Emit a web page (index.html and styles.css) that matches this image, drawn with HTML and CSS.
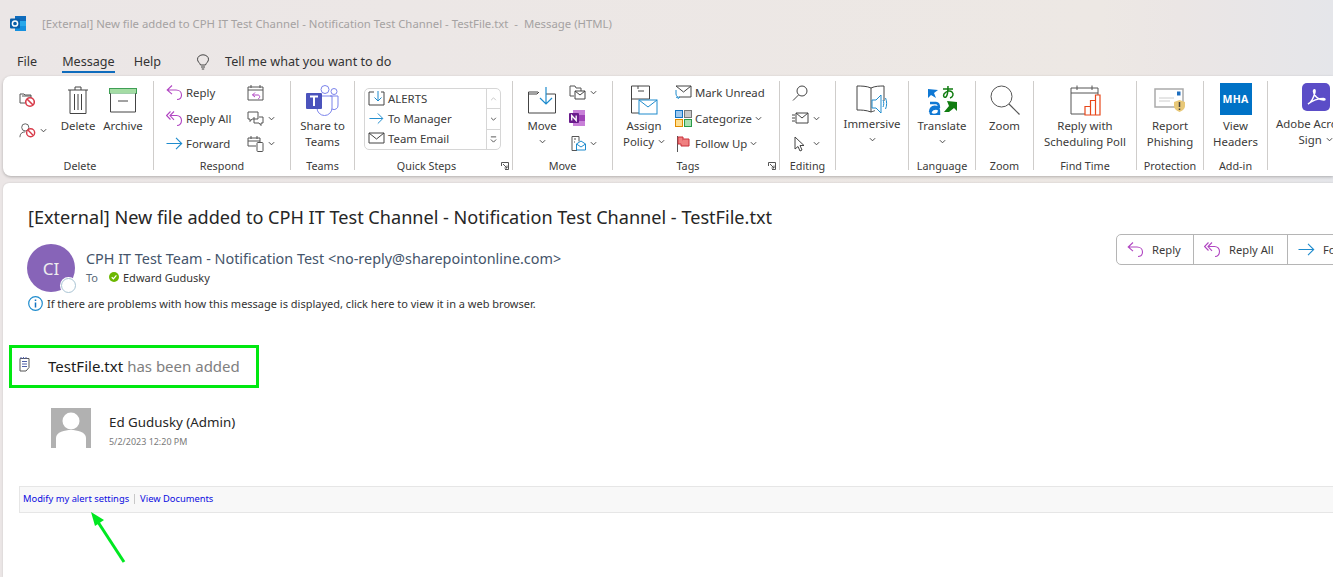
FILE: index.html
```html
<!DOCTYPE html>
<html lang="en">
<head>
<meta charset="utf-8">
<title>Message</title>
<link rel="stylesheet" href="styles.css">
</head>
<body>
<svg class="defs" aria-hidden="true">
  <symbol id="chev" viewBox="0 0 8 5"><path d="M1 1l3 3 3-3" fill="none" stroke="#444" stroke-width="1.1"/></symbol>
  <symbol id="reply" viewBox="0 0 17 17"><path d="M6 1.5L1.2 6 6 10.2M1.2 6H10c3.2 0 5.5 2.2 5.5 5 0 2.6-1.8 4.5-4.5 4.5" fill="none" stroke="#b146c2" stroke-width="1.1"/></symbol>
  <symbol id="replyall" viewBox="0 0 17 17"><path d="M4.5 1.5L.6 5.5 4.5 9.5M8 1.5L4 5.5 8 9.8M4 5.5h6.5c3 0 5 2.2 5 5 0 2.8-1.8 5-4.5 5" fill="none" stroke="#b146c2" stroke-width="1.1"/></symbol>
  <symbol id="forward" viewBox="0 0 17 17"><path d="M.5 8.5h15M10 2.8l5.7 5.7-5.7 5.7" fill="none" stroke="#1e8bcd" stroke-width="1.1"/></symbol>
</svg>

<header class="titlebar">
  <svg class="logo" width="17" height="17" viewBox="0 0 17 17"><rect x="5" y="1" width="11" height="15" fill="#1490df"/><rect x="5" y="1" width="11" height="5" fill="#0f6cbd"/><rect x="10" y="6" width="6" height="5" fill="#28a8ea"/><rect x="0" y="3.5" width="10" height="10" rx="1" fill="#0a5ea8"/><circle cx="5" cy="8.5" r="2.6" fill="none" stroke="#fff" stroke-width="1.5"/></svg>
  <span class="window-title">[External] New file added to CPH IT Test Channel - Notification Test Channel - TestFile.txt &nbsp;- &nbsp;Message (HTML)</span>
</header>

<nav class="tabs">
  <span class="tab tab-file">File</span>
  <span class="tab tab-active">Message</span>
  <span class="tab tab-help">Help</span>
  <svg class="bulb" width="14" height="16" viewBox="0 0 14 16"><path d="M4.5 11C4 9 1.5 8 1.5 5.2 1.5 2.8 4 .8 7 .8s5.500 2 5.500 4.400C12.500 8 10 9 9.500 11zM5 13h4M5.800 15h2.400" fill="none" stroke="#444" stroke-width="1"/></svg>
  <span class="tab">Tell me what you want to do</span>
</nav>

<section class="ribbon">
  <div class="group g-delete">
    <div class="group-body">
      <div class="icon-col">
        <span class="icon-cell"><svg width="17" height="16" viewBox="0 0 17 16"><path d="M1 2h4l1 1h6v3M1 2v9h5M3 4h9" fill="none" stroke="#555"/><circle cx="11" cy="10" r="4.300" fill="#fff" stroke="#d83b4a" stroke-width="1.600"/><path d="M8 7l6 6" stroke="#d83b4a" stroke-width="1.600"/></svg></span>
        <span class="icon-cell"><svg width="17" height="17" viewBox="0 0 19 17"><circle cx="7" cy="5" r="4" fill="none" stroke="#555"/><path d="M1 16c0-4 2.500-6 6-6" fill="none" stroke="#555"/><circle cx="13" cy="11" r="4.500" fill="#fff" stroke="#d83b4a" stroke-width="1.600"/><path d="M10 8l6 6" stroke="#d83b4a" stroke-width="1.600"/></svg><svg class="chev" width="7" height="5"><use href="#chev"/></svg></span>
      </div>
      <div class="large w-delete">
        <span class="large-icon"><svg width="22" height="29" viewBox="0 0 22 29"><path d="M1 4h20M8 4V1h6v3M3 4v23.500h16V4M7.500 8v16M11 8v16M14.500 8v16" fill="none" stroke="#444"/></svg></span>
        <span class="large-text">Delete</span>
      </div>
      <div class="large w-archive">
        <span class="large-icon"><svg width="28" height="25" viewBox="0 0 28 25"><rect x=".5" y=".5" width="27" height="5" fill="#a4dca4" stroke="#3f9f55"/><path d="M1.500 5.500v18.500h25V5.500M9 13h10" fill="#fff" stroke="#444"/></svg></span>
        <span class="large-text">Archive</span>
      </div>
    </div>
    <div class="group-label">Delete</div>
  </div>

  <div class="group g-respond">
    <div class="group-body">
      <div class="rows rows-respond">
        <div class="row"><svg width="17" height="17"><use href="#reply"/></svg><span>Reply</span></div>
        <div class="row"><svg width="17" height="17"><use href="#replyall"/></svg><span>Reply All</span></div>
        <div class="row"><svg width="17" height="17"><use href="#forward"/></svg><span>Forward</span></div>
      </div>
      <div class="rows">
        <div class="row"><svg width="17" height="17" viewBox="0 0 17 17"><path d="M1 3h15v13H1zM1 6h15M4 1v3M13 1v3" fill="none" stroke="#555"/><path d="M8 8.500L5.500 11 8 13M5.500 11H11c2 0 2.500 3 0 4" fill="none" stroke="#b146c2"/></svg></div>
        <div class="row"><svg width="17" height="17" viewBox="0 0 17 17"><path d="M1 2h10v7H5l-2 2.500V9H1zM7 7v6h5l2 2.500V13h2V7h-4" fill="#fff" stroke="#555"/></svg><svg class="chev" width="7" height="5"><use href="#chev"/></svg></div>
        <div class="row"><svg width="17" height="17" viewBox="0 0 17 17"><path d="M9 11H1V3h12v4M1 6h12M4 1v3M10 1v3" fill="none" stroke="#555"/><rect x="10" y="7.500" width="6" height="9" rx=".8" fill="#fff" stroke="#555"/></svg><svg class="chev" width="7" height="5"><use href="#chev"/></svg></div>
      </div>
    </div>
    <div class="group-label">Respond</div>
  </div>

  <div class="group g-center">
    <div class="group-body">
      <div class="large fill">
        <span class="large-icon"><svg width="33" height="31" viewBox="0 0 33 31"><circle cx="19" cy="4.500" r="4" fill="#fff" stroke="#7b83eb"/><circle cx="28" cy="6.500" r="3" fill="#fff" stroke="#7b83eb"/><path d="M24 11h8v9a4 4 0 0 1-6 4M11 11h15v12a7.500 7.500 0 0 1-15 0z" fill="#fff" stroke="#7b83eb"/><rect x="0" y="8" width="16" height="16" rx="1" fill="#4b53bc"/><path d="M4 11.500h8M8 11.500V21" stroke="#fff" stroke-width="2"/></svg></span>
        <span class="large-text">Share to<br>Teams</span>
      </div>
    </div>
    <div class="group-label">Teams</div>
  </div>

  <div class="group g-quick">
    <div class="group-body">
      <div class="quick-box">
        <div class="quick-list">
          <div class="quick-row"><svg width="17" height="15" viewBox="0 0 17 15"><path d="M6 1H1v13h15V1h-3" fill="none" stroke="#444"/><path d="M10 0v10M6.500 6.500l3.500 3.500 3.500-3.500" fill="none" stroke="#1e8bcd"/></svg><span>ALERTS</span></div>
          <div class="quick-row"><svg width="17" height="15"><use href="#forward"/></svg><span>To Manager</span></div>
          <div class="quick-row"><svg width="17" height="15" viewBox="0 0 17 15"><path d="M1 2h15v10H1zM1 2l7.500 6L16 2" fill="none" stroke="#444"/></svg><span>Team Email</span></div>
        </div>
        <div class="quick-scroll">
          <span class="scroll-btn"><svg width="7" height="4" viewBox="0 0 8 5"><path d="M1 4l3-3 3 3" fill="none" stroke="#bbb"/></svg></span>
          <span class="scroll-btn"><svg width="7" height="4"><use href="#chev"/></svg></span>
          <span class="scroll-btn"><svg width="7" height="7" viewBox="0 0 8 8"><path d="M1 1h6M1 4l3 3 3-3" fill="none" stroke="#444"/></svg></span>
        </div>
      </div>
    </div>
    <div class="group-label">Quick Steps</div>
    <svg class="launcher" width="8" height="8" viewBox="0 0 8 8"><path d="M.5 4V.5H7.500V7.500H4M2 2l4 4M6 3.500V6H3.500" fill="none" stroke="#555"/></svg>
  </div>

  <div class="group g-move">
    <div class="group-body">
      <div class="large w-move">
        <span class="large-icon"><svg width="28" height="27" viewBox="0 0 28 27"><path d="M10 5H.5v21h27V7H18M.5 7H9l2-2" fill="#fff" stroke="#444"/><path d="M18 0v17M12 11l6 6 6-6" fill="none" stroke="#1e8bcd" stroke-width="1.200"/></svg></span>
        <span class="large-text">Move</span>
        <svg class="chev-under" width="7" height="5"><use href="#chev"/></svg>
      </div>
      <div class="rows rows-move">
        <div class="row"><svg width="17" height="16" viewBox="0 0 17 16"><path d="M1 1h5l1 2h5v3M1 1v10h4" fill="none" stroke="#555"/><path d="M6 6h10v8H6zM6 6l5 4 5-4" fill="#fff" stroke="#444"/></svg><svg class="chev" width="7" height="5"><use href="#chev"/></svg></div>
        <div class="row"><svg width="17" height="17" viewBox="0 0 17 17"><rect x="4" y="0" width="12" height="16" fill="#c880d8"/><rect x="10" y="5" width="6" height="6" fill="#a044b8"/><rect x="0" y="3" width="10" height="10" rx="1" fill="#6a1b8c"/><path d="M2.700 10.500v-5L7.200 10.500v-5" fill="none" stroke="#fff" stroke-width="1.300"/></svg></div>
        <div class="row row-rules"><svg width="15" height="15" viewBox="0 0 15 15"><path d="M1 .5h7v5M1 .5v14h5M3 3h2M3 6h1" fill="none" stroke="#555"/><path d="M5.500 8l4.500-3 4.500 3v6h-9zM5.500 8l4.500 3 4.500-3" fill="#fff" stroke="#1e8bcd"/></svg><svg class="chev" width="7" height="5"><use href="#chev"/></svg></div>
      </div>
    </div>
    <div class="group-label">Move</div>
  </div>

  <div class="group g-tags">
    <div class="group-body">
      <div class="large w-assign">
        <span class="large-icon"><svg width="28" height="31" viewBox="0 0 28 31"><path d="M1.500 1h18v13H1.500zM1.500 14v14h9M8 6h6M8 1v3M14 1" fill="none" stroke="#444"/><rect x="9" y="15" width="18" height="14" fill="#fff" stroke="#1e8bcd"/><path d="M9 15l9 7 9-7" fill="none" stroke="#1e8bcd"/></svg></span>
        <span class="large-text">Assign<br>Policy<svg class="chev-inline" width="7" height="5"><use href="#chev"/></svg></span>
      </div>
      <div class="rows rows-tags">
        <div class="row"><svg width="17" height="17" viewBox="0 0 17 17"><path d="M1 2h15v11H4M1 2l7.500 6L16 2" fill="none" stroke="#444"/><path d="M1 6v4c0 2 2 3.500 4 3.500M1 13l3 1.500" fill="none" stroke="#1e8bcd"/></svg><span>Mark Unread</span></div>
        <div class="row"><svg class="cat" width="17" height="17" viewBox="0 0 17 17"><rect x=".5" y=".5" width="7" height="7" fill="#9cc8f0" stroke="#1272c0"/><rect x="9.500" y=".5" width="7" height="7" fill="#c8c8c8" stroke="#777"/><rect x=".5" y="9.500" width="7" height="7" fill="#ffdf90" stroke="#e08b00"/><rect x="9.500" y="9.500" width="7" height="7" fill="#a8e0b0" stroke="#2a9a48"/></svg><span>Categorize</span><svg class="chev" width="7" height="5"><use href="#chev"/></svg></div>
        <div class="row"><svg width="17" height="17" viewBox="0 0 17 17"><path d="M2.500 1v16" stroke="#555"/><path d="M3 2h5v7H3z" fill="#f08080" stroke="#c8303a"/><path d="M8 4h6v7H6V9" fill="#f08080" stroke="#c8303a"/></svg><span>Follow Up</span><svg class="chev" width="7" height="5"><use href="#chev"/></svg></div>
      </div>
    </div>
    <div class="group-label">Tags</div>
    <svg class="launcher" width="8" height="8" viewBox="0 0 8 8"><path d="M.5 4V.5H7.500V7.500H4M2 2l4 4M6 3.500V6H3.500" fill="none" stroke="#555"/></svg>
  </div>

  <div class="group g-editing">
    <div class="group-body">
      <div class="rows rows-editing">
        <div class="row"><svg width="16" height="16" viewBox="0 0 16 16"><circle cx="10" cy="6" r="5" fill="none" stroke="#444"/><path d="M6.500 10L1 15.500" stroke="#444"/></svg></div>
        <div class="row"><svg width="17" height="14" viewBox="0 0 17 14"><path d="M4 2h12v10H4zM4 2l6 5 6-5M0 4h3M0 7h3M0 10h3" fill="none" stroke="#444"/></svg><svg class="chev" width="7" height="5"><use href="#chev"/></svg></div>
        <div class="row"><svg width="17" height="16" viewBox="0 0 13 16"><path d="M1 1v12l3-2.500 2 4.500 2-1-2-4.500h4z" fill="#fff" stroke="#444"/></svg><svg class="chev" width="7" height="5"><use href="#chev"/></svg></div>
      </div>
    </div>
    <div class="group-label">Editing</div>
  </div>

  <div class="group g-immersive">
    <div class="group-body">
      <div class="large fill">
        <span class="large-icon"><svg width="32" height="30" viewBox="0 0 32 30"><path d="M15 3C11 1 5 1 1 1v24c4 0 9 0 14 2 3-1 3-1 4-1.500M15 3c4-2 9-2 13-2v15M15 3v24" fill="#fff" stroke="#444"/><path d="M16 15h4l5-5v18l-5-5h-4zM27 15c1 2 1 5 0 7M29.500 13c1.500 3 1.500 8 0 11" fill="#fff" stroke="#1e8bcd"/></svg></span>
        <span class="large-text im-text">Immersive</span>
        <svg class="chev-under" width="7" height="5"><use href="#chev"/></svg>
      </div>
    </div>
  </div>

  <div class="group g-lang">
    <div class="group-body">
      <div class="large fill">
        <span class="large-icon"><svg width="30" height="30" viewBox="0 0 30 30"><path d="M11 5L1 4v9l3-3 5 3-2-5z" fill="#0f78d4"/><path d="M3 27c0-7 9-7 9-1v4M3 18h6c3 0 3 3 3 5M12 24c-9-2-11 6-5 6 3 0 5-2 5-4" fill="none" stroke="#0f78d4" stroke-width="2.400"/><path d="M20 16l10 1v9l-3-3-5 4H17l5-6z" fill="#107c10"/><path d="M16 4h10M21 1c0 6-1 10-2 11-2 1-3-1-2-3 2-3 6-4 8-2s1 5-2 6" fill="none" stroke="#107c10" stroke-width="1.500"/></svg></span>
        <span class="large-text">Translate</span>
        <svg class="chev-under" width="7" height="5"><use href="#chev"/></svg>
      </div>
    </div>
    <div class="group-label">Language</div>
  </div>

  <div class="group g-zoom">
    <div class="group-body">
      <div class="large fill">
        <span class="large-icon"><svg width="30" height="30" viewBox="0 0 30 30"><circle cx="11.500" cy="11.500" r="10.500" fill="none" stroke="#555"/><path d="M19 19l10.500 10.500" stroke="#555" stroke-width="1.200"/></svg></span>
        <span class="large-text">Zoom</span>
      </div>
    </div>
    <div class="group-label">Zoom</div>
  </div>

  <div class="group g-find">
    <div class="group-body">
      <div class="large fill">
        <span class="large-icon"><svg width="31" height="31" viewBox="0 0 31 31"><path d="M1 3h27v10M1 3v26h14M1 8h27M7 .5V5M22 .5V5" fill="#fff" stroke="#555"/><path d="M15.500 22h5.500v8.500h-5.500zM21 16h5v14.500h-5zM26 10.500h4.500v20H26z" fill="#fff" stroke="#e8471a" stroke-width="1.200" transform="translate(-.500 -.500)"/></svg></span>
        <span class="large-text">Reply with<br>Scheduling Poll</span>
      </div>
    </div>
    <div class="group-label">Find Time</div>
  </div>

  <div class="group g-prot">
    <div class="group-body">
      <div class="large fill">
        <span class="large-icon"><svg width="32" height="24" viewBox="0 0 32 24"><rect x="1" y="1" width="28" height="18" fill="#fff" stroke="#aaa" stroke-width="1.500"/><rect x="23" y="3.500" width="3.500" height="4" fill="#1e6fc0"/><path d="M5 10h15M5 13h11" stroke="#ccc"/><path d="M20 14l5.500-2 5.500 2v4c0 3-3 5-5.500 6-2.500-1-5.500-3-5.500-6z" fill="#e8c878"/><path d="M25.500 14v5M25.500 20.500v1.500" stroke="#444" stroke-width="1.500"/></svg></span>
        <span class="large-text">Report<br>Phishing</span>
      </div>
    </div>
    <div class="group-label">Protection</div>
  </div>

  <div class="group g-addin">
    <div class="group-body">
      <div class="large fill">
        <span class="mha">MHA</span>
        <span class="large-text">View<br>Headers</span>
      </div>
    </div>
    <div class="group-label">Add-in</div>
  </div>

  <div class="group g-adobe">
    <div class="group-body">
      <div class="large w-adobe">
        <span class="adobe-icon"><svg width="20" height="20" viewBox="0 0 20 20"><path d="M2 17c3-1 6-7 7-12 .5-3-1.500-3-1.500-.5 0 4 5 8.500 10 8.500 2 0 2-1.500 0-1.500-5 0-11 2-15.500 5.500z" fill="none" stroke="#fff" stroke-width="1.500"/></svg></span>
        <span class="large-text adobe-text">Adobe Acrobat<br>Sign<svg class="chev-inline" width="7" height="5"><use href="#chev"/></svg></span>
      </div>
    </div>
  </div>
</section>

<main class="message">
  <h1 class="subject">[External] New file added to CPH IT Test Channel - Notification Test Channel - TestFile.txt</h1>
  <div class="head">
    <div class="avatar">CI<span class="presence"></span></div>
    <div class="meta">
      <div class="sender">CPH IT Test Team - Notification Test &lt;no-reply@sharepointonline.com&gt;</div>
      <div class="to"><span class="to-label">To</span><svg width="10" height="10" viewBox="0 0 10 10"><circle cx="5" cy="5" r="5" fill="#6bb700"/><path d="M2.700 5.200L4.400 6.800 7.400 3.400" fill="none" stroke="#fff" stroke-width="1.200"/></svg><span>Edward Gudusky</span></div>
    </div>
    <div class="actions">
      <button class="action act-reply" type="button"><svg width="17" height="17"><use href="#reply"/></svg>Reply</button>
      <button class="action act-all" type="button"><svg width="17" height="17"><use href="#replyall"/></svg>Reply All</button>
      <button class="action act-fwd" type="button"><svg width="17" height="17"><use href="#forward"/></svg>Forward</button>
    </div>
  </div>
  <div class="info"><svg width="15" height="15" viewBox="0 0 15 15"><circle cx="7.500" cy="7.500" r="6.800" fill="#fff" stroke="#1e8bcd" stroke-width="1.200"/><path d="M7.500 6.500v5M7.500 3.500v1.500" stroke="#1272c0" stroke-width="1.500"/></svg><span>If there are problems with how this message is displayed, click here to view it in a web browser.</span></div>

  <div class="file-row">
    <svg class="file-icon" width="11" height="15" viewBox="0 0 11 15"><path d="M1 1.500h9v9l-3 3.500H1z" fill="#fff" stroke="#555"/><path d="M3 4.500h5M3 7h5M3 9.500h5M2 0v2M4.500 0v2M7 0v2" stroke="#5060a8"/></svg>
    <span class="file-name">TestFile.txt</span>
    <span class="file-added">has been added</span>
  </div>
  <div class="author">
    <svg class="author-pic" width="40" height="40" viewBox="0 0 40 40"><rect width="40" height="40" fill="#b1b1b1"/><circle cx="20" cy="13" r="8.500" fill="#fff"/><path d="M5 40V30c0-6 9-8 15-8s15 2 15 8v10z" fill="#fff"/></svg>
    <div>
      <div class="author-name">Ed Gudusky (Admin)</div>
      <div class="author-date">5/2/2023 12:20 PM</div>
    </div>
  </div>
  <footer class="links"><a href="#">Modify my alert settings</a><span class="pipe"></span><a href="#">View Documents</a></footer>

  <div class="highlight"></div>
  <svg class="pointer" width="45" height="60" viewBox="0 0 45 60"><path d="M39 57L11 14" stroke="#00e820" stroke-width="3"/><path d="M6 7l13 8-9 6z" fill="#00e820"/></svg>
</main>
</body>
</html>
```

FILE: styles.css
```css
* { box-sizing: border-box; }
html, body { margin: 0; height: 100%; }
body {
  width: 1333px;
  height: 577px;
  overflow: hidden;
  background: linear-gradient(to right, #ebe6e6 0, #ece7e6 400px, #ede8e4 1100px, #ebe6e5 1180px, #e5e6ea 1333px);
  font-family: "Noto Sans", "Open Sans", sans-serif;
  color: #3b3a39;
}
.defs { position: absolute; width: 0; height: 0; }
svg { flex: none; display: block; }

.titlebar { height: 46px; display: flex; align-items: center; padding-left: 10px; }
.logo { margin-right: 15px; }
.window-title { font-size: 11.350px; color: #a5a2a2; white-space: pre; }

.tabs { height: 30px; display: flex; align-items: flex-start; padding-left: 17px; font-size: 12.6px; }
.tab { line-height: 31px; height: 26px; color: #333; }
.tab-file { margin-right: 25px; }
.tab-active { border-bottom: 2px solid #0f6cbd; margin-right: 19px; height: 27px; }
.tab-help { margin-right: 35px; }
.bulb { margin: 8px 15px 0 0; }

.ribbon {
  margin-left: 3px;
  height: 100px;
  display: flex;
  background: #fff;
  border-radius: 8px 0 0 8px;
  box-shadow: 0 1px 3px rgba(0,0,0,.25);
  padding-top: 5px;
  font-size: 11.4px;
  color: #3b3a39;
  overflow: hidden;
}
.group {
  position: relative;
  height: 89px;
  display: flex;
  flex-direction: column;
  flex: none;
  border-right: 1px solid #cfcdcb;
}
.group-body { flex: 1; display: flex; min-height: 0; }
.group-label {
  height: 14px;
  line-height: 14px;
  margin-bottom: -3px;
  text-align: center;
  font-size: 10.8px;
  white-space: nowrap;
}
.launcher { position: absolute; right: 3px; bottom: 0; }
.g-delete { width: 151px; padding-left: 16px; }
.g-respond { width: 137px; padding-left: 12px; }
.g-center { width: 64px; }
.g-quick { width: 158px; padding-left: 9px; }
.g-move { width: 100px; }
.g-tags { width: 167px; }
.g-editing { width: 56px; padding-left: 12px; }
.g-immersive { width: 73px; }
.g-lang { width: 67px; }
.g-zoom { width: 58px; }
.g-find { width: 103px; }
.g-prot { width: 67px; }
.g-addin { width: 64px; }
.g-adobe { flex: 1; border-right: 0; }
.g-delete .group-label { margin-left: -12px; }
.g-respond .group-label { margin-left: -12px; }
.g-quick .group-label { margin-left: -9px; margin-right: 14px; }
.g-tags .group-label { margin-right: 16px; }
.g-editing .group-label { margin-left: -12px; }

.icon-col { width: 38px; padding-top: 3px; display: flex; flex-direction: column; }
.icon-cell { height: 31px; display: flex; align-items: center; gap: 4px; }

.large { display: flex; flex-direction: column; align-items: center; padding-top: 3px; flex: none; }
.fill { width: 100%; }
.large-icon { height: 32px; display: flex; align-items: center; justify-content: center; }
.large-text { margin-top: 2px; line-height: 16px; text-align: center; white-space: nowrap; }
.im-text { margin-top: 0; }
.chev-under { margin-top: 5px; }
.chev-inline { display: inline-block; margin-left: 4px; vertical-align: 2px; }
.w-delete { width: 42px; }
.w-archive { width: 46px; margin-left: 1px; }
.w-move { width: 58px; }
.w-assign { width: 62px; }
.w-adobe { padding-left: 8px; align-items: flex-start; }
.adobe-icon {
  width: 28px; height: 28px; margin-left: 26px; background: #5b4dc7; border-radius: 5px;
  display: flex; align-items: center; justify-content: center; margin-top: -1px;
}
.adobe-text { margin-top: 5px; }
.mha {
  width: 32px; height: 32px; background: #0072c6; color: #fff; font-size: 10.5px; font-weight: 700;
  display: flex; align-items: center; justify-content: center; letter-spacing: .2px; margin-top: -1px; margin-bottom: 1px;
}

.rows { display: flex; flex-direction: column; margin-top: -1px; }
.row { height: 25.500px; display: flex; align-items: center; gap: 3px; white-space: nowrap; }
.row .chev { margin-left: 1px; }
.rows-respond { width: 81px; }
.rows-move { margin-left: -2px; }
.rows-tags .row { letter-spacing: -.05px; }
.row-rules svg:first-child { margin-left: 2px; }
.rows-tags .row .chev { margin-left: 0; }

.quick-box { width: 137px; height: 62px; margin-top: 7px; border: 1px solid #d6d6d6; border-radius: 5px; display: flex; }
.quick-list { flex: 1; margin-top: -2px; padding: 1px 0 0 3px; }
.quick-row { height: 20px; display: flex; align-items: center; gap: 3px; }
.quick-scroll { width: 14px; border-left: 1px solid #d6d6d6; display: flex; flex-direction: column; }
.scroll-btn { flex: 1; display: flex; align-items: center; justify-content: center; border-bottom: 1px solid #d6d6d6; }
.scroll-btn:last-child { border-bottom: 0; }

.message {
  position: relative;
  margin: 7px 0 0 3px;
  height: 394px;
  background: #fff;
  border-radius: 6px 0 0 0;
  overflow: hidden;
  box-shadow: 0 0 2px rgba(0,0,0,.15);
}
.subject {
  margin: 23px 0 15px 25px;
  font-size: 18.100px;
  line-height: 23px;
  font-weight: 400;
  color: #262626;
  white-space: nowrap;
}
.head { display: flex; padding-left: 24px; height: 48px; }
.avatar {
  position: relative; width: 48px; height: 48px; border-radius: 50%;
  background: #8764b8; color: #eee; font-size: 17px;
  display: flex; align-items: center; justify-content: center; flex: none;
}
.presence {
  position: absolute; right: -1px; bottom: -1px; width: 15px; height: 15px;
  border-radius: 50%; background: #fff; border: 1.500px solid #a9c4d4; box-shadow: 0 0 0 1px #fff;
}
.meta { margin: 4px 0 0 11px; white-space: nowrap; }
.sender { height: 19px; line-height: 21px; font-size: 14.400px; color: #44546a; }
.to { height: 20px; display: flex; align-items: center; font-size: 11px; color: #333; }
.to-label { width: 23px; color: #5a6a7a; }
.to svg { margin-right: 4px; }
.actions {
  margin: -10px -36px 0 auto; height: 31px; display: flex; flex: none;
  background: #fff; border: 1px solid #b5b5b5; border-radius: 5px;
}
.action {
  font: inherit; font-size: 11.200px; color: #3b3a39; background: none; border: 0; padding: 0 0 0 10px;
  display: flex; align-items: center; gap: 8px; border-right: 1px solid #b5b5b5; white-space: nowrap;
}
.act-reply { width: 77px; }
.act-all { width: 94px; }
.act-fwd { width: 80px; border-right: 0; }
.info { display: flex; align-items: center; gap: 4px; margin: 4px 0 0 25px; height: 15px; font-size: 11px; color: #333; white-space: nowrap; }

.file-row { margin: 44px 0 0 16px; height: 22px; display: flex; align-items: center; font-size: 15px; white-space: nowrap; }
.file-icon { margin: -4px 18px 0 0; }
.file-name { color: #1a1a1a; margin-right: 4px; }
.file-added { color: #808080; }
.author { display: flex; gap: 18px; margin: 31px 0 0 48px; height: 40px; }
.author-name { font-size: 13.350px; line-height: 18px; margin-top: 5px; color: #262626; white-space: nowrap; }
.author-date { font-size: 8.950px; line-height: 12px; margin-top: 5px; color: #7a7a7a; white-space: nowrap; }
.links {
  margin: 38px 0 0 16px; height: 27px; padding: 0 0 2px 3px; display: flex; align-items: center;
  background: #f8f8f8; border: 1px solid #e6e6e6; border-right: 0; font-size: 9.350px;
}
.links a { color: #0b0be0; text-decoration: none; white-space: nowrap; }
.pipe { width: 1px; height: 10px; background: #c8c8c8; margin: 0 5px; }

.highlight { position: absolute; left: 6px; top: 162px; width: 250px; height: 43px; border: 3px solid #00e810; }
.pointer { position: absolute; left: 82px; top: 322px; }
```
